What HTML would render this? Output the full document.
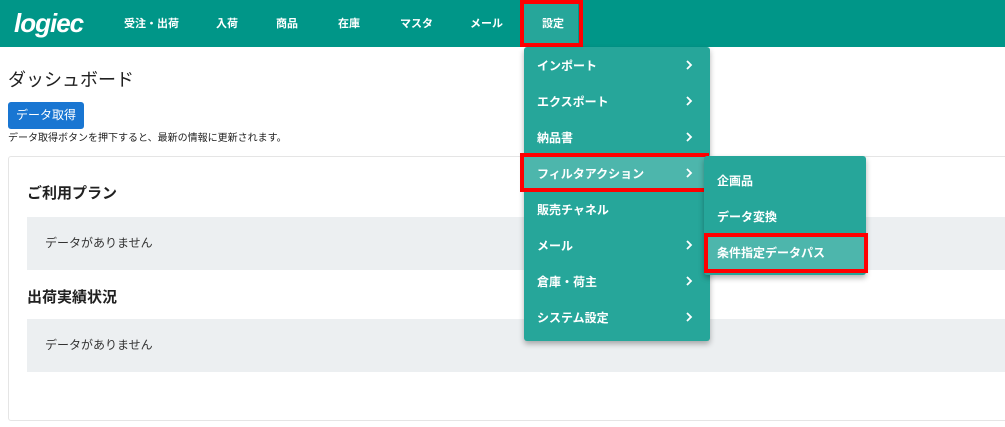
<!DOCTYPE html>
<html><head><meta charset="utf-8"><style>
*{margin:0;padding:0;box-sizing:border-box}
body{width:1005px;height:427px;overflow:hidden;background:#fff;font-family:"Liberation Sans","Noto Sans CJK JP",sans-serif;position:relative;color:#212121}
.hdr{position:absolute;left:0;top:0;width:1005px;height:47px;background:#009688}
.nav{position:absolute;top:15px;color:#fff;font-size:11px;font-weight:bold}
.logo{position:absolute;left:14px;top:8px;color:#fff;font-size:26px;font-weight:bold;font-style:italic;letter-spacing:-1px}
.act{position:absolute;left:524px;top:4px;width:54px;height:39px;background:#26a69a}
.red{position:absolute;border:4px solid #f00}
.menu{position:absolute;background:#26a69a;border-radius:3px;box-shadow:0 3px 6px rgba(0,0,0,.3)}
.mi{position:absolute;left:13px;color:#fff;font-size:12px;font-weight:bold}
.ar{position:absolute;right:17px;width:8px;height:12px}
.card{position:absolute;left:8px;top:156px;width:1010px;height:265px;border:1px solid #e5e5e5;border-radius:3px}
.gray{position:absolute;left:27px;width:990px;background:#eceff1;height:53px}
.gt{position:absolute;left:45px;font-size:12px;color:#333}
h3{position:absolute;left:27px;font-size:15px;font-weight:bold}
</style></head><body>
<div class="hdr"></div>
<div class="logo">logiec</div>
<div class="act"></div>
<div class="nav" style="left:124px">受注・出荷</div>
<div class="nav" style="left:216px">入荷</div>
<div class="nav" style="left:276px">商品</div>
<div class="nav" style="left:338px">在庫</div>
<div class="nav" style="left:400px">マスタ</div>
<div class="nav" style="left:470px">メール</div>
<div class="nav" style="left:542px">設定</div>
<div class="red" style="left:520px;top:0;width:63px;height:47px"></div>

<div style="position:absolute;left:8px;top:66px;font-size:18px">ダッシュボード</div>
<div style="position:absolute;left:8px;top:102px;width:76px;height:27px;background:#1976d2;border-radius:3px;color:#fff;font-size:12px;text-align:center;line-height:27px">データ取得</div>
<div style="position:absolute;left:8px;top:129px;font-size:10px">データ取得ボタンを押下すると、最新の情報に更新されます。</div>

<div class="card"></div>
<h3 style="top:182px">ご利用プラン</h3>
<div class="gray" style="top:217px"></div>
<div class="gt" style="top:234px">データがありません</div>
<h3 style="top:286px">出荷実績状況</h3>
<div class="gray" style="top:319px"></div>
<div class="gt" style="top:336px">データがありません</div>

<div class="menu" style="left:524px;top:47px;width:186px;height:294px">
<div style="position:absolute;left:0;top:108px;width:186px;height:36px;background:#4db6ac"></div>
<div class="mi" style="top:10px">インポート</div><svg class="ar" style="top:12px" viewBox="0 0 8 12"><path d="M2 2l4 4-4 4" fill="none" stroke="#fff" stroke-width="1.8"/></svg>
<div class="mi" style="top:46px">エクスポート</div><svg class="ar" style="top:48px" viewBox="0 0 8 12"><path d="M2 2l4 4-4 4" fill="none" stroke="#fff" stroke-width="1.8"/></svg>
<div class="mi" style="top:82px">納品書</div><svg class="ar" style="top:84px" viewBox="0 0 8 12"><path d="M2 2l4 4-4 4" fill="none" stroke="#fff" stroke-width="1.8"/></svg>
<div class="mi" style="top:118px">フィルタアクション</div><svg class="ar" style="top:120px" viewBox="0 0 8 12"><path d="M2 2l4 4-4 4" fill="none" stroke="#fff" stroke-width="1.8"/></svg>
<div class="mi" style="top:154px">販売チャネル</div>
<div class="mi" style="top:190px">メール</div><svg class="ar" style="top:192px" viewBox="0 0 8 12"><path d="M2 2l4 4-4 4" fill="none" stroke="#fff" stroke-width="1.8"/></svg>
<div class="mi" style="top:226px">倉庫・荷主</div><svg class="ar" style="top:228px" viewBox="0 0 8 12"><path d="M2 2l4 4-4 4" fill="none" stroke="#fff" stroke-width="1.8"/></svg>
<div class="mi" style="top:262px">システム設定</div><svg class="ar" style="top:264px" viewBox="0 0 8 12"><path d="M2 2l4 4-4 4" fill="none" stroke="#fff" stroke-width="1.8"/></svg>
</div>
<div class="red" style="left:520px;top:153px;width:189px;height:39px"></div>

<div class="menu" style="left:704px;top:156px;width:162px;height:119px">
<div style="position:absolute;left:0;top:80px;width:162px;height:36px;background:#4db6ac"></div>
<div class="mi" style="top:16px">企画品</div>
<div class="mi" style="top:52px">データ変換</div>
<div class="mi" style="top:88px">条件指定データパス</div>
</div>
<div class="red" style="left:704px;top:233px;width:164px;height:40px"></div>
</body></html>
